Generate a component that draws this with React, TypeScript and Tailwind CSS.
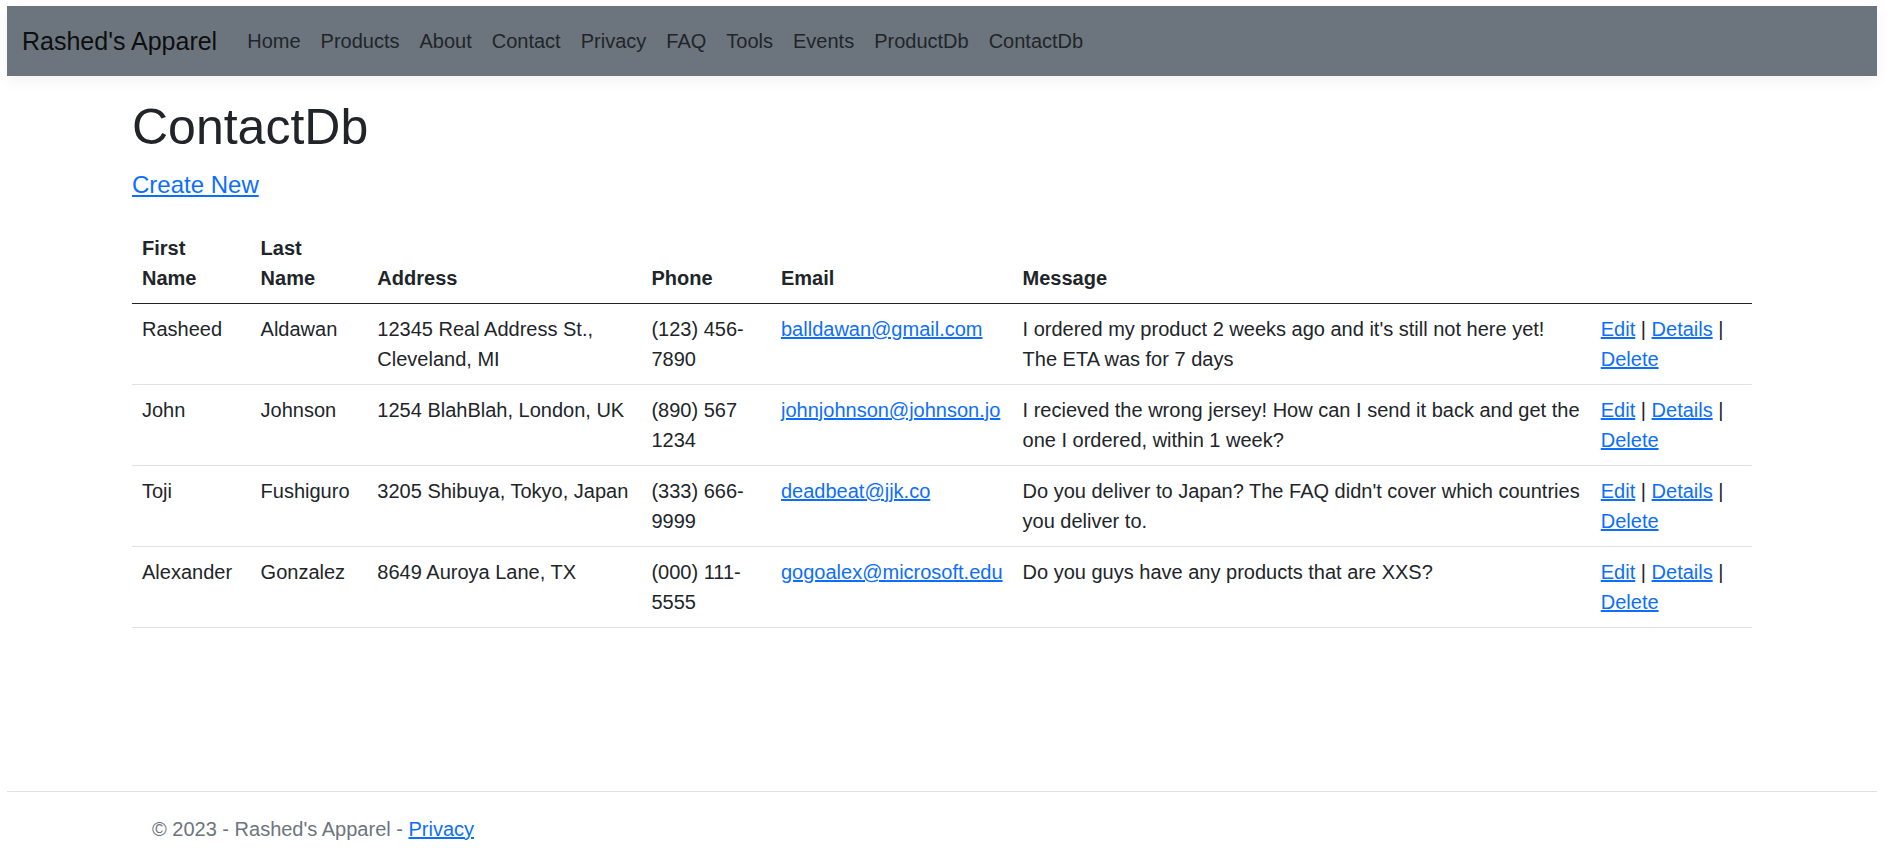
const navLinks = ['Home', 'Products', 'About', 'Contact', 'Privacy', 'FAQ', 'Tools', 'Events', 'ProductDb', 'ContactDb']

interface Contact {
	firstName: string
	lastName: string
	address: string
	phone: string
	email: string
	message: string
}

const contacts: Contact[] = [
	{
		firstName: 'Rasheed',
		lastName: 'Aldawan',
		address: '12345 Real Address St., Cleveland, MI',
		phone: '(123) 456-7890',
		email: 'balldawan@gmail.com',
		message: "I ordered my product 2 weeks ago and it's still not here yet! The ETA was for 7 days",
	},
	{
		firstName: 'John',
		lastName: 'Johnson',
		address: '1254 BlahBlah, London, UK',
		phone: '(890) 567 1234',
		email: 'johnjohnson@johnson.jo',
		message: 'I recieved the wrong jersey! How can I send it back and get the one I ordered, within 1 week?',
	},
	{
		firstName: 'Toji',
		lastName: 'Fushiguro',
		address: '3205 Shibuya, Tokyo, Japan',
		phone: '(333) 666-9999',
		email: 'deadbeat@jjk.co',
		message: "Do you deliver to Japan? The FAQ didn't cover which countries you deliver to.",
	},
	{
		firstName: 'Alexander',
		lastName: 'Gonzalez',
		address: '8649 Auroya Lane, TX',
		phone: '(000) 111-5555',
		email: 'gogoalex@microsoft.edu',
		message: 'Do you guys have any products that are XXS?',
	},
]

const headers = ['First Name', 'Last Name', 'Address', 'Phone', 'Email', 'Message', '']

export default function App() {
	return (
		<div className="min-h-screen flex flex-col bg-white pl-[7px] pr-[11px] pt-[6px] text-[#212529] font-['Liberation_Sans',Arial,sans-serif]">
			{/* Navbar */}
			<nav className="h-[70px] flex items-center px-[15px] bg-[#6c757d] shadow-[0_5px_15px_rgba(0,0,0,0.05)]">
				<a href="#" className="text-[25px] leading-[37px] text-black/90 mr-[20px]">
					Rashed's Apparel
				</a>
				<ul className="flex">
					{navLinks.map((link) => (
						<li key={link}>
							<a href="#" className="block px-[10px] py-[10px] text-[20px] leading-[30px] text-[#212529]">
								{link}
							</a>
						</li>
					))}
				</ul>
			</nav>

			{/* Main */}
			<main className="w-[1650px] mx-auto px-[15px] pt-[21px] pb-[20px]">
				<h1 className="text-[50px] leading-[60px] font-normal mb-[10px]">ContactDb</h1>
				<p className="text-[24px] leading-[36px] mb-[20px]">
					<a href="#" className="text-[#0d6efd] underline">
						Create New
					</a>
				</p>
				<table className="w-full text-[20px] leading-[30px] align-top">
					<thead className="align-bottom">
						<tr className="border-b border-[#212529]">
							{headers.map((h, i) => (
								<th key={i} className="p-[10px] text-left font-bold">
									{h}
								</th>
							))}
						</tr>
					</thead>
					<tbody>
						{contacts.map((c) => (
							<tr key={c.email} className="border-b border-[#dee2e6]">
								<td className="p-[10px] align-top">{c.firstName}</td>
								<td className="p-[10px] align-top">{c.lastName}</td>
								<td className="p-[10px] align-top">{c.address}</td>
								<td className="p-[10px] align-top">{c.phone}</td>
								<td className="p-[10px] align-top">
									<a href="#" className="text-[#0d6efd] underline">
										{c.email}
									</a>
								</td>
								<td className="p-[10px] align-top">{c.message}</td>
								<td className="p-[10px] align-top">
									<a href="#" className="text-[#0d6efd] underline">
										Edit
									</a>{' '}
									|{' '}
									<a href="#" className="text-[#0d6efd] underline">
										Details
									</a>{' '}
									|{' '}
									<a href="#" className="text-[#0d6efd] underline">
										Delete
									</a>
								</td>
							</tr>
						))}
					</tbody>
				</table>
			</main>

			{/* Footer */}
			<footer className="mt-auto h-[75px] border-t border-[#dee2e6] text-[#6c757d] text-[20px] leading-[74px] whitespace-nowrap">
				<div className="w-[1650px] mx-auto pl-[35px]">
					© 2023 - Rashed's Apparel -{' '}
					<a href="#" className="text-[#0d6efd] underline">
						Privacy
					</a>
				</div>
			</footer>
		</div>
	)
}
